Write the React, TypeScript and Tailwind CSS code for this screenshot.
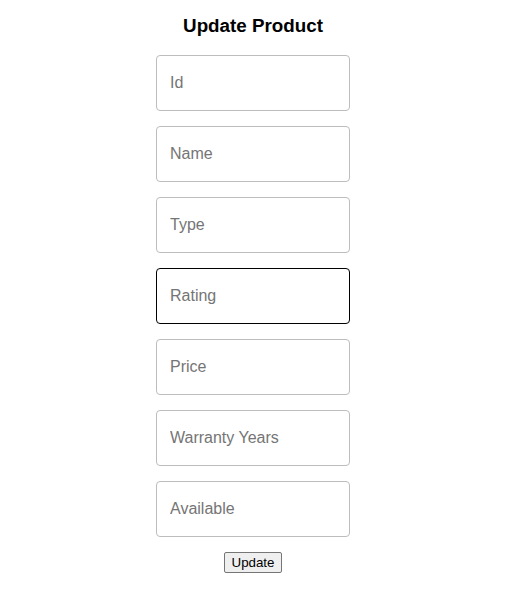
const fields = ['Id', 'Name', 'Type', 'Rating', 'Price', 'Warranty Years', 'Available'];

export default function App() {
  return (
    <div className="flex flex-col items-center bg-white font-['Liberation_Sans',Arial,sans-serif]">
      <h1 className="mt-[12px] h-[28px] text-[18.8px] font-bold leading-[28px] text-black">Update Product</h1>
      <form className="mt-[15px] flex flex-col items-center gap-[15px]">
        {fields.map(f => (
          <input
            key={f}
            placeholder={f}
            className={
              'h-[56px] w-[194px] rounded-[4px] border px-[13px] text-[16px] text-black outline-none placeholder:text-[#757575] ' +
              (f === 'Rating' ? 'border-black' : 'border-[#bdbdbd]')
            }
          />
        ))}
        <button
          type="button"
          className="h-[21px] rounded-[2px] border border-[#767676] bg-[#efefef] px-[7px] text-[13.33px] leading-none text-black"
        >
          Update
        </button>
      </form>
    </div>
  );
}
